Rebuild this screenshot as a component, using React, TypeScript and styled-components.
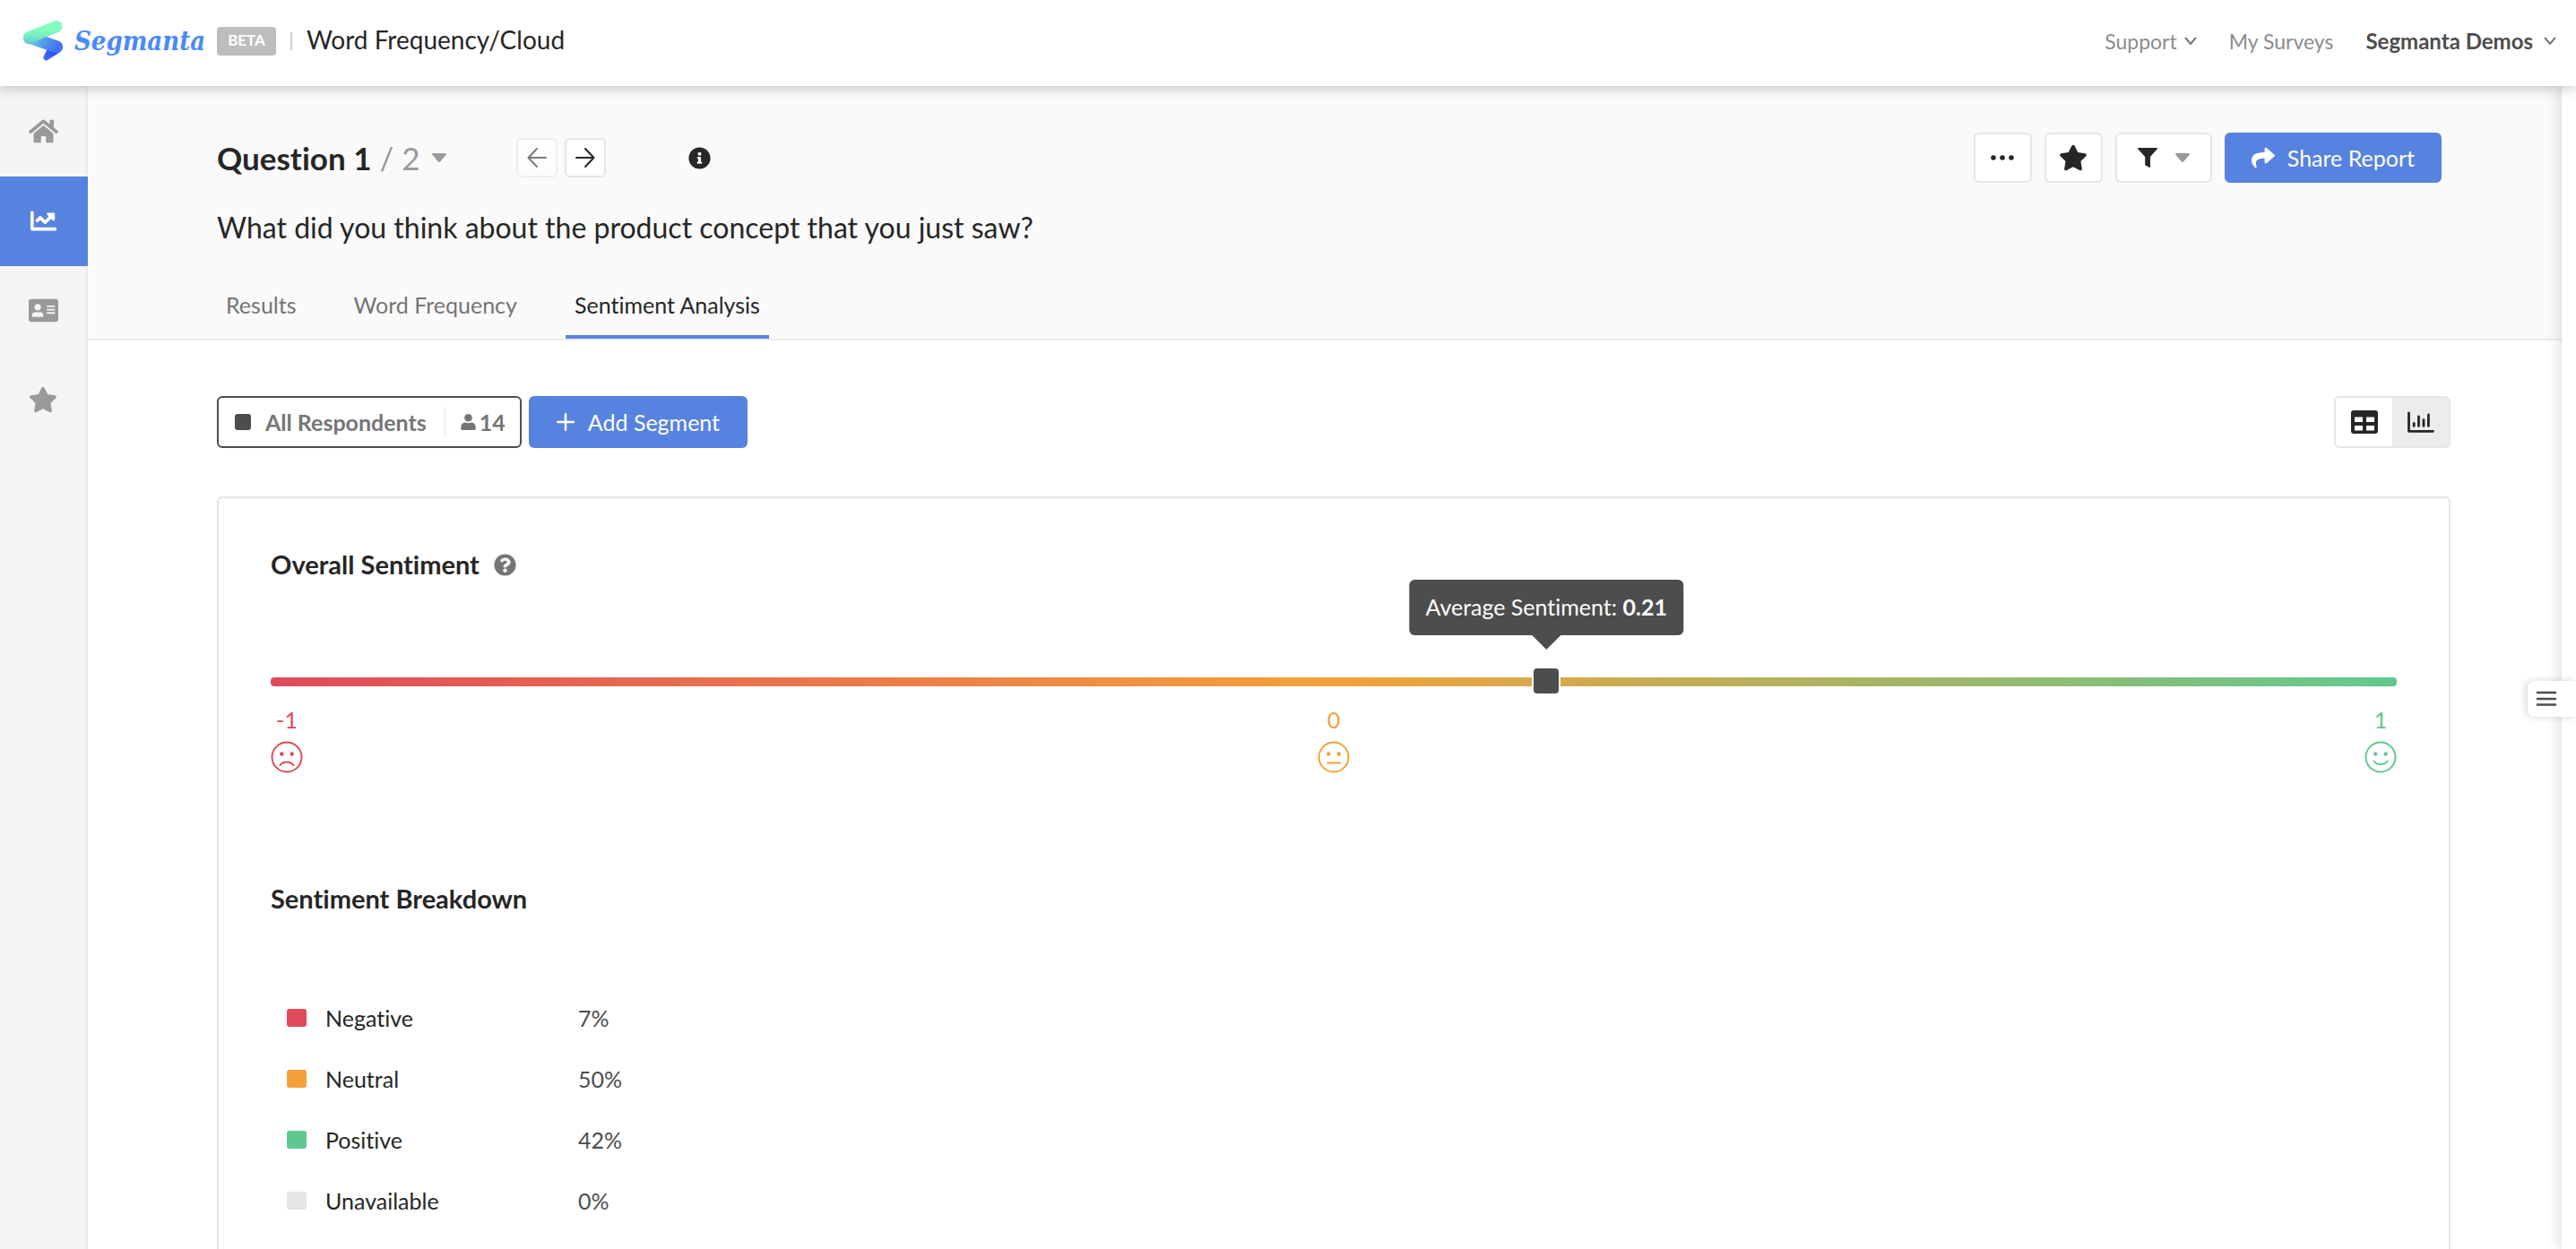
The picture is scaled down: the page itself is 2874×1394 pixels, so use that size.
import React from "react";
import styled, { createGlobalStyle, css } from "styled-components";
import {
  FaHome,
  FaChartLine,
  FaAddressCard,
  FaStar,
  FaShare,
  FaInfoCircle,
  FaQuestionCircle,
} from "react-icons/fa";

const color = {
  ink: "#262626",
  dark: "#4d4d4d",
  text: "#757575",
  muted: "#999999",
  line: "#e6e6e6",
  accent: "#5783e0",
  negative: "#e04a5b",
  neutral: "#f4a13a",
  positive: "#5fc88f",
  none: "#e5e5e5",
};

const GlobalStyle = createGlobalStyle`
  *, *::before, *::after { box-sizing: border-box; }
  body {
    margin: 0;
    background: #fff;
    color: ${color.ink};
    font-family: Lato, "Liberation Sans", sans-serif;
    font-size: 25px;
    line-height: 32px;
    font-variant-ligatures: none;
  }
  button { font: inherit; color: inherit; cursor: pointer; }
  svg { display: block; flex: none; }
  h1, h2, p { margin: 0; }
`;

/* ---------- Shell ---------- */

const Shell = styled.div`
  display: flex;
  flex-direction: column;
  height: 100vh;
  overflow: hidden;
`;

const TopBar = styled.header`
  position: relative;
  z-index: 2;
  flex: none;
  display: flex;
  align-items: center;
  justify-content: space-between;
  height: 96px;
  padding: 0 22px 5px 26px;
  background: #fff;
  box-shadow: 0 2px 14px rgba(0, 0, 0, 0.24);
`;

const Brand = styled.div`
  display: flex;
  align-items: center;
`;

const HomeLink = styled.a`
  display: flex;
  align-items: center;
  gap: 13px;
  color: #4a8af8;
  text-decoration: none;
`;

const Wordmark = styled.span`
  font: italic 700 29px/36px "DejaVu Serif Condensed", "DejaVu Serif", serif;
`;

const Badge = styled.span`
  margin-left: 13px;
  padding: 0 12px 2px;
  border-radius: 4px;
  background: #bdbdbd;
  color: #fff;
  font-size: 17px;
  font-weight: 700;
  line-height: 30px;
`;

const BarRule = styled.span`
  width: 2px;
  height: 20px;
  margin: 0 16px;
  background: #cccccc;
`;

const SurveyTitle = styled.span`
  padding-bottom: 3px;
  font-size: 28px;
`;

const TopNav = styled.nav`
  display: flex;
  align-items: center;
  gap: 36px;
`;

const navItem = css`
  display: flex;
  align-items: center;
  padding: 0;
  border: 0;
  background: none;
  color: #8c8c8c;
  font-size: 23px;
  text-decoration: none;
`;

const NavLink = styled.a`
  ${navItem}
`;

const NavMenu = styled.button<{ $strong?: boolean }>`
  ${navItem}
  gap: ${(p) => (p.$strong ? 12 : 8)}px;
  color: ${(p) => (p.$strong ? color.dark : "#8c8c8c")};
  font-size: ${(p) => (p.$strong ? 24 : 23)}px;
  font-weight: ${(p) => (p.$strong ? 700 : 400)};
`;

const Body = styled.div`
  flex: 1;
  min-height: 0;
  display: flex;
`;

const SideNav = styled.nav`
  flex: none;
  display: flex;
  flex-direction: column;
  width: 98px;
  padding-top: 1px;
  background: #f5f5f5;
  box-shadow: inset -2px 0 #ebebeb;
`;

const SideLink = styled.a<{ $active?: boolean }>`
  display: flex;
  align-items: center;
  justify-content: center;
  height: 100px;
  padding: 0 2px 2px 0;
  background: ${(p) => (p.$active ? color.accent : "none")};
  color: ${(p) => (p.$active ? "#fff" : color.muted)};
`;

const Main = styled.main`
  flex: 1;
  min-width: 0;
  overflow: hidden;
`;

const Drawer = styled.aside`
  position: relative;
  z-index: 1;
  flex: none;
  width: 16px;
  background: #fff;
  box-shadow: 0 0 18px rgba(0, 0, 0, 0.18);
`;

const DrawerToggle = styled.button`
  position: absolute;
  top: 664px;
  right: 0;
  display: flex;
  align-items: center;
  width: 54px;
  height: 40px;
  padding: 0 0 0 9px;
  border: 0;
  border-radius: 8px 0 0 8px;
  background: #fff;
  box-shadow: -2px 0 8px rgba(0, 0, 0, 0.16);
`;

/* ---------- Question header ---------- */

const QuestionHeader = styled.section`
  padding: 52px 134px 0 144px;
  border-bottom: 2px solid #ebebeb;
  background: #fafafa;
`;

const QuestionBar = styled.div`
  display: flex;
  align-items: center;
  justify-content: space-between;
  height: 56px;
`;

const QuestionNav = styled.div`
  display: flex;
  align-items: center;
`;

const QuestionPicker = styled.button`
  display: flex;
  align-items: center;
  gap: 14px;
  padding: 0;
  border: 0;
  background: none;
  color: ${color.muted};
  font-size: 35px;
  line-height: 44px;

  strong {
    color: ${color.ink};
  }
`;

const Pager = styled.div`
  display: flex;
  gap: 8px;
  margin: 0 92px 0 78px;
`;

const PagerButton = styled.button`
  display: flex;
  align-items: center;
  justify-content: center;
  width: 46px;
  height: 44px;
  padding: 0;
  border: 2px solid ${color.line};
  border-radius: 6px;
  background: #fff;

  &:disabled {
    opacity: 0.6;
    color: ${color.ink};
  }
`;

const Actions = styled.div`
  display: flex;
  gap: 14px;
`;

const ToolButton = styled.button<{ $wide?: boolean; $primary?: boolean }>`
  display: flex;
  align-items: center;
  justify-content: center;
  gap: ${(p) => (p.$primary ? 14 : 20)}px;
  min-width: ${(p) => (p.$wide ? 108 : 65)}px;
  height: 56px;
  padding: ${(p) => (p.$primary ? "0 28px" : "0")};
  border: 2px solid ${(p) => (p.$primary ? color.accent : color.line)};
  border-radius: 6px;
  background: ${(p) => (p.$primary ? color.accent : "#fff")};
  color: ${(p) => (p.$primary ? "#fff" : color.ink)};
`;

const QuestionText = styled.h1`
  margin-top: 30px;
  font-size: 32px;
  font-weight: 400;
  line-height: 40px;
`;

const Tabs = styled.nav`
  display: flex;
  gap: 44px;
  margin-top: 30px;
`;

const Tab = styled.a<{ $active?: boolean }>`
  padding: 20px 10px 18px;
  border-bottom: 4px solid ${(p) => (p.$active ? color.accent : "transparent")};
  color: ${(p) => (p.$active ? color.ink : color.text)};
  text-decoration: none;
`;

/* ---------- Report ---------- */

const Report = styled.section`
  padding: 62px 124px 62px 144px;
`;

const SegmentBar = styled.div`
  display: flex;
  justify-content: space-between;
`;

const Segments = styled.div`
  display: flex;
  gap: 8px;
`;

const SegmentChip = styled.button`
  display: flex;
  align-items: center;
  height: 58px;
  padding: 0 16px 0 18px;
  border: 2px solid ${color.dark};
  border-radius: 6px;
  background: #fff;
  color: ${color.text};
  font-weight: 700;
`;

const ChipSwatch = styled.span`
  width: 18px;
  height: 18px;
  margin-right: 16px;
  border-radius: 3px;
  background: ${color.dark};
`;

const ChipCount = styled.span`
  display: flex;
  align-items: center;
  gap: 4px;
  height: 34px;
  margin-left: 20px;
  padding-left: 17px;
  border-left: 1px solid ${color.line};
`;

const AddSegment = styled.button`
  display: flex;
  align-items: center;
  gap: 15px;
  height: 58px;
  padding: 0 31px;
  border: 0;
  border-radius: 6px;
  background: ${color.accent};
  color: #fff;
`;

const ViewSwitch = styled.div`
  display: flex;
  height: 58px;
  border: 2px solid ${color.line};
  border-radius: 6px;
  overflow: hidden;
`;

const ViewButton = styled.button`
  display: flex;
  align-items: center;
  justify-content: center;
  width: 63px;
  padding: 0;
  border: 0;
  background: #fff;

  &[aria-pressed="true"] {
    background: #ececec;
  }
`;

const Card = styled.div`
  margin-top: 54px;
  padding: 56px 58px 60px;
  border: 2px solid ${color.line};
  border-radius: 6px;
`;

const CardHeading = styled.h2`
  display: flex;
  align-items: center;
  gap: 16px;
  font-size: 29px;
  font-weight: 700;
  line-height: 36px;
`;

const HelpButton = styled.button`
  padding: 0;
  border: 0;
  background: none;
  color: ${color.text};
`;

const Scale = styled.div`
  position: relative;
  height: 10px;
  margin-top: 108px;
  border-radius: 4px;
  background: linear-gradient(
    to right,
    ${color.negative},
    ${color.neutral} 50%,
    ${color.positive}
  );
`;

const Marker = styled.div`
  position: absolute;
  top: 50%;
  width: 32px;
  height: 32px;
  margin: -17px 0 0 -16px;
  border: 2px solid #fff;
  border-radius: 6px;
  background: ${color.dark};
`;

const Tooltip = styled.div`
  position: absolute;
  bottom: 65px;
  left: 50%;
  transform: translateX(-50%);
  padding: 14px 18px 16px;
  border-radius: 6px;
  background: ${color.dark};
  color: #fff;
  white-space: nowrap;

  &::after {
    content: "";
    position: absolute;
    top: 100%;
    left: 50%;
    margin-left: -16px;
    border: 16px solid transparent;
    border-top-color: ${color.dark};
    border-bottom-width: 0;
  }
`;

const ScaleLabels = styled.div`
  display: flex;
  justify-content: space-between;
  margin-top: 21px;
`;

const ScaleLabel = styled.div<{ $color: string }>`
  display: flex;
  flex-direction: column;
  align-items: center;
  gap: 8px;
  width: 36px;
  color: ${(p) => p.$color};
`;

const Section = styled.div`
  margin-top: 122px;
`;

const Breakdown = styled.table`
  margin-top: 81px;
  border-spacing: 0;

  th,
  td {
    height: 68px;
    padding: 0;
    text-align: left;
    font-weight: 400;
  }
  th {
    width: 343px;
  }
  td {
    color: ${color.dark};
  }
`;

const BreakdownName = styled.span`
  display: flex;
  align-items: center;
  gap: 21px;
  padding-left: 18px;
`;

const Swatch = styled.span<{ $color: string }>`
  width: 22px;
  height: 20px;
  border-radius: 3px;
  background: ${(p) => p.$color};
`;

/* ---------- Icons ---------- */

const Logo = () => (
  <svg width="44" height="46" viewBox="0 0 44 46" aria-hidden="true">
    <defs>
      <linearGradient id="top" gradientUnits="userSpaceOnUse" x1="0" y1="10" x2="0" y2="26">
        <stop offset="0" stopColor="#80fcbd" />
        <stop offset="0.4" stopColor="#7af0c2" />
        <stop offset="1" stopColor="#64c2d8" />
      </linearGradient>
      <linearGradient id="mid" gradientUnits="userSpaceOnUse" x1="4" y1="18" x2="36" y2="34">
        <stop offset="0" stopColor="#70dcca" />
        <stop offset="0.5" stopColor="#56a0ea" />
        <stop offset="1" stopColor="#3f74f6" />
      </linearGradient>
      <linearGradient id="tail" gradientUnits="userSpaceOnUse" x1="38" y1="26" x2="25" y2="42">
        <stop offset="0" stopColor="#4078f5" />
        <stop offset="0.5" stopColor="#2d50fa" />
        <stop offset="1" stopColor="#4068fb" />
      </linearGradient>
    </defs>
    <path d="M31 24 22.900 39.400a3.300 3.300 0 0 0 5 4.200L41.400 35A7 7 0 0 0 39 22.800Z" fill="url(#tail)" />
    <path d="M7.500 19 36.500 29" stroke="url(#mid)" strokeWidth="14" strokeLinecap="round" fill="none" />
    <path d="M33.900 1.100 4 12.600A7.200 7.200 0 0 0 5 26C10 27 12 23.500 18 21.500L40.400 12.200A6.200 6.200 0 0 0 33.900 1.100Z" fill="url(#top)" />
  </svg>
);

const Chevron = () => (
  <svg width="14" height="10" viewBox="0 0 14 10" fill="none" stroke={color.text} strokeWidth="2" strokeLinecap="round" aria-hidden="true">
    <path d="M1.500 1.500 7 8l5.500-6.500" />
  </svg>
);

const Caret = () => (
  <svg width="16" height="10" viewBox="0 0 16 10" fill={color.muted} aria-hidden="true">
    <path d="M1.400 0h13.200c1.100 0 1.600 1.200.9 2L9 9.500a1.400 1.400 0 0 1-2 0L.5 2C-.2 1.200.3 0 1.400 0Z" />
  </svg>
);

const Arrow = ({ back }: { back?: boolean }) => (
  <svg width="22" height="24" viewBox="0 0 22 24" fill="none" stroke="currentColor" strokeWidth="2" strokeLinecap="round" strokeLinejoin="round" aria-hidden="true">
    <path d={back ? "M21 12H1.500M11 2 1.500 12 11 22" : "M1 12h19.500M11 2l9.500 10L11 22"} />
  </svg>
);

const Dots = () => (
  <svg width="26" height="6" viewBox="0 0 26 6" fill="currentColor" aria-hidden="true">
    <circle cx="3" cy="3" r="2.800" />
    <circle cx="13" cy="3" r="2.800" />
    <circle cx="23" cy="3" r="2.800" />
  </svg>
);

const Funnel = () => (
  <svg width="22" height="22" viewBox="0 0 22 22" fill="currentColor" aria-hidden="true">
    <path d="M.7 0h20.600c.7 0 .9.800.5 1.300L14 10v11.200c0 .7-.7 1-1.200.6L8.700 19.500a1 1 0 0 1-.5-.9V10L.2 1.300C-.2.800.1 0 .7 0Z" />
  </svg>
);

const Person = () => (
  <svg width="17" height="18" viewBox="0 0 17 18" fill="currentColor" aria-hidden="true">
    <circle cx="8.500" cy="4.300" r="4.300" />
    <path d="M5 9.600c2.300 1 4.700 1 7 0 3 .1 4.700 2.500 4.700 5.400v1.400c0 .9-.7 1.600-1.600 1.600H1.900C1 18 .3 17.300.3 16.400V15C.3 12.100 2 9.700 5 9.600Z" />
  </svg>
);

const Plus = () => (
  <svg width="20" height="20" viewBox="0 0 20 20" stroke="currentColor" strokeWidth="2.500" strokeLinecap="round" aria-hidden="true">
    <path d="M10 1.200v17.600M1.200 10h17.600" />
  </svg>
);

const TableIcon = () => (
  <svg width="30" height="26" viewBox="0 0 30 26" aria-hidden="true">
    <rect width="30" height="26" rx="3" fill="currentColor" />
    <path d="M4 7.500h9v5.500H4zM17 7.500h9v5.500h-9zM4 17h9v5.500H4zM17 17h9v5.500h-9z" fill="#fff" />
  </svg>
);

const BarsIcon = () => (
  <svg width="30" height="24" viewBox="0 0 30 24" fill="none" stroke="currentColor" strokeWidth="2.800" strokeLinecap="round" strokeLinejoin="round" aria-hidden="true">
    <path d="M1.500 2v20.300h27M7.200 13.400v3M12.500 6v10.400M18 9.600v6.800M23.400 4v12.400" />
  </svg>
);

const MenuIcon = () => (
  <svg width="24" height="20" viewBox="0 0 24 20" stroke={color.dark} strokeWidth="2.500" strokeLinecap="round" aria-hidden="true">
    <path d="M2 3h20M2 10h20M2 16.500h20" />
  </svg>
);

const mouths = {
  sad: "M10.500 27c3.500-4.800 11.500-4.800 15 0",
  flat: "M11 24.500h14",
  happy: "M10.500 22.500c3.500 4.800 11.500 4.800 15 0",
};

const Face = ({ mood }: { mood: keyof typeof mouths }) => (
  <svg width="36" height="36" viewBox="0 0 36 36" fill="none" stroke="currentColor" strokeWidth="2" strokeLinecap="round" aria-hidden="true">
    <circle cx="18" cy="18" r="16.500" />
    <circle cx="12.300" cy="14.500" r="2.200" fill="currentColor" stroke="none" />
    <circle cx="23.700" cy="14.500" r="2.200" fill="currentColor" stroke="none" />
    <path d={mouths[mood]} />
  </svg>
);

/* ---------- Data ---------- */

const averageSentiment = { label: "0.21", position: 60 };

const scaleMarks: { value: string; mood: keyof typeof mouths; color: string }[] = [
  { value: "-1", mood: "sad", color: color.negative },
  { value: "0", mood: "flat", color: color.neutral },
  { value: "1", mood: "happy", color: color.positive },
];

const breakdown = [
  { name: "Negative", share: "7%", color: color.negative },
  { name: "Neutral", share: "50%", color: color.neutral },
  { name: "Positive", share: "42%", color: color.positive },
  { name: "Unavailable", share: "0%", color: color.none },
];

export default function App() {
  return (
    <>
      <GlobalStyle />
      <Shell>
        <TopBar>
          <Brand>
            <HomeLink href="#">
              <Logo />
              <Wordmark>Segmanta</Wordmark>
            </HomeLink>
            <Badge>BETA</Badge>
            <BarRule />
            <SurveyTitle>Word Frequency/Cloud</SurveyTitle>
          </Brand>
          <TopNav aria-label="Account">
            <NavMenu type="button">
              Support <Chevron />
            </NavMenu>
            <NavLink href="#">My Surveys</NavLink>
            <NavMenu type="button" $strong>
              Segmanta Demos <Chevron />
            </NavMenu>
          </TopNav>
        </TopBar>

        <Body>
          <SideNav aria-label="Sections">
            <SideLink href="#" aria-label="Home"><FaHome size={33} /></SideLink>
            <SideLink href="#" aria-label="Analytics" $active><FaChartLine size={29} /></SideLink>
            <SideLink href="#" aria-label="Respondents"><FaAddressCard size={33} /></SideLink>
            <SideLink href="#" aria-label="Favorites"><FaStar size={32} /></SideLink>
          </SideNav>

          <Main>
            <QuestionHeader>
              <QuestionBar>
                <QuestionNav>
                  <QuestionPicker type="button" aria-haspopup="listbox">
                    <span><strong>Question 1</strong> / 2</span>
                    <Caret />
                  </QuestionPicker>
                  <Pager>
                    <PagerButton type="button" aria-label="Previous question" disabled><Arrow back /></PagerButton>
                    <PagerButton type="button" aria-label="Next question"><Arrow /></PagerButton>
                  </Pager>
                  <FaInfoCircle size={25} aria-hidden="true" />
                </QuestionNav>
                <Actions>
                  <ToolButton type="button" aria-label="More"><Dots /></ToolButton>
                  <ToolButton type="button" aria-label="Favorite"><FaStar size={32} /></ToolButton>
                  <ToolButton type="button" aria-label="Filter" $wide><Funnel /><Caret /></ToolButton>
                  <ToolButton type="button" $primary><FaShare size={26} />Share Report</ToolButton>
                </Actions>
              </QuestionBar>
              <QuestionText>What did you think about the product concept that you just saw?</QuestionText>
              <Tabs aria-label="Report views">
                <Tab href="#">Results</Tab>
                <Tab href="#">Word Frequency</Tab>
                <Tab href="#" $active aria-current="page">Sentiment Analysis</Tab>
              </Tabs>
            </QuestionHeader>

            <Report>
              <SegmentBar>
                <Segments>
                  <SegmentChip type="button">
                    <ChipSwatch />
                    All Respondents
                    <ChipCount><Person />14</ChipCount>
                  </SegmentChip>
                  <AddSegment type="button"><Plus />Add Segment</AddSegment>
                </Segments>
                <ViewSwitch>
                  <ViewButton type="button" aria-label="Table view" aria-pressed={false}><TableIcon /></ViewButton>
                  <ViewButton type="button" aria-label="Chart view" aria-pressed={true}><BarsIcon /></ViewButton>
                </ViewSwitch>
              </SegmentBar>

              <Card>
                <CardHeading>
                  Overall Sentiment
                  <HelpButton type="button" aria-label="About overall sentiment"><FaQuestionCircle size={25} /></HelpButton>
                </CardHeading>
                <Scale>
                  <Marker style={{ left: `${averageSentiment.position}%` }}>
                    <Tooltip>Average Sentiment: <b>{averageSentiment.label}</b></Tooltip>
                  </Marker>
                </Scale>
                <ScaleLabels>
                  {scaleMarks.map((m) => (
                    <ScaleLabel key={m.value} $color={m.color}>
                      {m.value}
                      <Face mood={m.mood} />
                    </ScaleLabel>
                  ))}
                </ScaleLabels>

                <Section>
                  <CardHeading>Sentiment Breakdown</CardHeading>
                  <Breakdown>
                    <tbody>
                      {breakdown.map((row) => (
                        <tr key={row.name}>
                          <th scope="row">
                            <BreakdownName><Swatch $color={row.color} />{row.name}</BreakdownName>
                          </th>
                          <td>{row.share}</td>
                        </tr>
                      ))}
                    </tbody>
                  </Breakdown>
                </Section>
              </Card>
            </Report>
          </Main>

          <Drawer>
            <DrawerToggle type="button" aria-label="Open panel"><MenuIcon /></DrawerToggle>
          </Drawer>
        </Body>
      </Shell>
    </>
  );
}
